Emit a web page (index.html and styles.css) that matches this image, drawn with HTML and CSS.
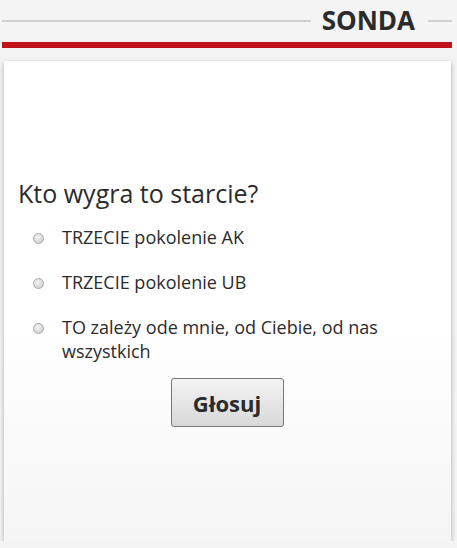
FILE: index.html
```html
<!DOCTYPE html>
<html lang="pl">
<head>
    <meta charset="UTF-8">
    <title>Sonda</title>
    <link rel="stylesheet" href="styles.css">
</head>
<body>
<div class="poll-box">
    <div class="poll-head">
        <span class="line"></span>
        <h2>SONDA</h2>
        <span class="line short"></span>
    </div>
    <div class="red-bar"></div>
    <div class="poll-card">
        <h3>Kto wygra to starcie?</h3>
        <ul class="answers">
            <li><input type="radio" name="vote" id="a1"><label for="a1">TRZECIE pokolenie AK</label></li>
            <li><input type="radio" name="vote" id="a2"><label for="a2">TRZECIE pokolenie UB</label></li>
            <li><input type="radio" name="vote" id="a3"><label for="a3">TO zależy ode mnie, od Ciebie, od nas wszystkich</label></li>
        </ul>
        <div class="actions">
            <button>Głosuj</button>
        </div>
    </div>
</div>
</body>
</html>
```

FILE: styles.css
```css
* {
    margin: 0;
    padding: 0;
    box-sizing: border-box;
}

body {
    background: #f4f4f4;
    font-family: 'Open Sans', sans-serif;
    color: #333;
}

.poll-box {
    padding: 0 5px 0 2px;
}

.poll-head {
    display: flex;
    align-items: center;
    height: 41px;
}

.poll-head .line {
    flex: 1;
    height: 2px;
    background: #d0d0d0;
    margin-top: 1px;
}

.poll-head .line.short {
    flex: 0 0 24px;
}

.poll-head h2 {
    font-size: 26px;
    font-weight: bold;
    color: #2b2b2b;
    padding: 0 13px 0 11px;
    line-height: 41px;
}

.red-bar {
    height: 6px;
    background: #c0141a;
    margin-top: 1px;
}

/* Card with the question */
.poll-card {
    margin: 13px 1px 0 2px;
    height: 480px;
    background: linear-gradient(to bottom, #ffffff 55%, #f5f5f5);
    box-shadow: 0 2px 5px rgba(0, 0, 0, 0.3);
    padding: 115px 15px 0 14px;
}

.poll-card h3 {
    font-size: 25px;
    font-weight: normal;
    color: #2b2b2b;
    line-height: 34px;
}

.answers {
    list-style: none;
    padding: 15px 0 0 15px;
}

.answers li {
    display: flex;
    align-items: flex-start;
    margin-bottom: 21px;
}

.answers li:last-child {
    margin-bottom: 0;
}

.answers input {
    appearance: none;
    width: 11px;
    height: 11px;
    margin: 8px 18px 0 0;
    flex: 0 0 11px;
    border: 1px solid #aaa;
    border-radius: 50%;
    background: radial-gradient(circle at 40% 35%, #f4f4f4, #c8c8c8);
}

.answers label {
    font-size: 18px;
    line-height: 24px;
    color: #2b2b2b;
}

.actions {
    text-align: center;
    padding-top: 15px;
}

.actions button {
    width: 113px;
    height: 49px;
    font-family: 'Open Sans', sans-serif;
    font-size: 22px;
    font-weight: bold;
    color: #2b2b2b;
    border: 1px solid #777;
    border-radius: 3px;
    background: linear-gradient(to bottom, #f4f4f4, #d8d8d8);
}
```
